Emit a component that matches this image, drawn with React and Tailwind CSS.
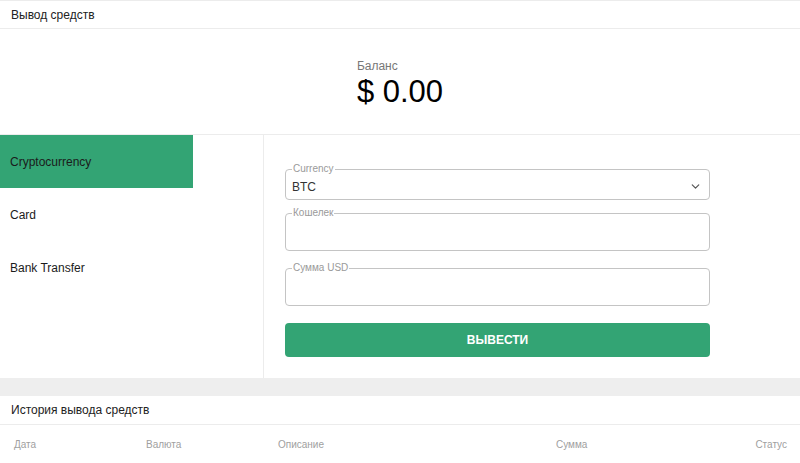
import { ChevronDown } from 'lucide-react';

const methods = ['Cryptocurrency', 'Card', 'Bank Transfer'];

function Field({ label, children, height }) {
  return (
    <fieldset className="border border-[#c4c4c4] rounded-[4px] px-[6px] m-0 min-w-0">
      <legend className="text-[10px] leading-[10px] text-[#9a9a9a] px-[1px]">{label}</legend>
      <div className={height + ' flex items-center'}>{children}</div>
    </fieldset>
  );
}

export default function App() {
  return (
    <div className="w-[800px] h-[463px] overflow-hidden bg-white text-[#222] font-['Liberation_Sans',Arial,sans-serif]">
      <div className="h-[29px] flex items-center px-[11px] text-[12px] border-t border-b border-[#ececec]">
        Вывод средств
      </div>

      <div className="h-[106px] flex justify-center items-center border-b border-[#ececec]">
        <div className="pt-[4px]">
          <div className="text-[12px] text-[#777] leading-[14px]">Баланс</div>
          <div className="text-[31px] leading-[34px] text-black mt-[2px]">$ 0.00</div>
        </div>
      </div>

      <div className="flex h-[243px]">
        <div className="w-[264px] border-r border-[#ececec]">
          {methods.map((m, i) => (
            <div
              key={m}
              className={
                'h-[53px] w-[193px] flex items-center px-[10px] text-[12px] ' +
                (i === 0 ? 'bg-[#33a474] text-[#1b1b1b]' : 'text-[#1b1b1b]')
              }
            >
              {m}
            </div>
          ))}
        </div>
        <div className="flex-1 pl-[21px] pt-[29px]">
          <div className="w-[425px] flex flex-col">
            <Field label="Currency" height="h-[25px]">
              <span className="text-[12px] text-[#333] flex-1">BTC</span>
              <ChevronDown size={13} strokeWidth={2.2} className="text-[#555] mr-[1px]" />
            </Field>
            <div className="h-[8px]" />
            <Field label="Кошелек" height="h-[32px]" />
            <div className="h-[12px]" />
            <Field label="Сумма USD" height="h-[32px]" />
            <button className="mt-[17px] h-[34px] rounded-[4px] bg-[#33a474] text-white text-[12px] font-bold">
              ВЫВЕСТИ
            </button>
          </div>
        </div>
      </div>

      <div className="h-[18px] bg-[#eeeeee]" />

      <div className="h-[29px] flex items-center px-[11px] text-[12px] border-b border-[#ececec]">
        История вывода средств
      </div>
      <div className="grid grid-cols-[132px_132px_278px_1fr_auto] pl-[14px] pr-[13px] pt-[12px] text-[10px] text-[#a0a0a0]">
        <span>Дата</span>
        <span>Валюта</span>
        <span>Описание</span>
        <span>Сумма</span>
        <span>Статус</span>
      </div>
    </div>
  );
}
